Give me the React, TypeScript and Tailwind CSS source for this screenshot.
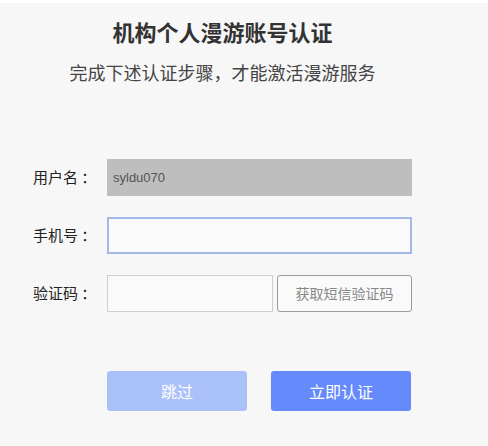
export default function App() {
    const font = { fontFamily: '"Noto Sans CJK SC", "Liberation Sans", sans-serif' };

    return (
        <div className="w-[488px] h-[446px] bg-[#f7f7f7] border-t-[3px] border-white" style={font}>
            <div className="ml-[33px] w-[379px] flex flex-col">
                <h1 className="pt-[12px] text-center text-[22px] leading-[33px] font-bold text-[#333]">机构个人漫游账号认证</h1>
                <p className="mt-[11px] text-center text-[18px] leading-[27px] text-[#444]">完成下述认证步骤，才能激活漫游服务</p>

                <div className="mt-[73px] flex flex-col gap-[21px]">
                    <div className="flex items-center">
                        <label className="w-[74px] text-[15px] text-[#222]">用户名 ：</label>
                        <div className="w-[305px] h-[37px] bg-[#bebebe] flex items-center pl-[6px] text-[13px] text-[#555] font-['Liberation_Sans']">syldu070</div>
                    </div>
                    <div className="flex items-center">
                        <label className="w-[74px] text-[15px] text-[#222]">手机号 ：</label>
                        <input className="w-[305px] h-[37px] bg-[#fafafa] border-2 border-[#a4b9e8] outline-none" />
                    </div>
                    <div className="flex items-center">
                        <label className="w-[74px] text-[15px] text-[#222]">验证码 ：</label>
                        <input className="w-[166px] h-[37px] bg-[#fafafa] border border-[#cfcfcf] outline-none" />
                        <button className="ml-[4px] w-[135px] h-[37px] border border-[#9a9a9a] rounded-[3px] bg-[#fafafa] text-[14px] text-[#888]">获取短信验证码</button>
                    </div>
                </div>

                <div className="mt-[59px] ml-[74px] flex gap-[24px]">
                    <button className="w-[140px] h-[40px] rounded-[3px] bg-[#aac0f9] text-white text-[16px]">跳过</button>
                    <button className="w-[140px] h-[40px] rounded-[3px] bg-[#658afb] text-white text-[16px]">立即认证</button>
                </div>
            </div>
        </div>
    )
}
